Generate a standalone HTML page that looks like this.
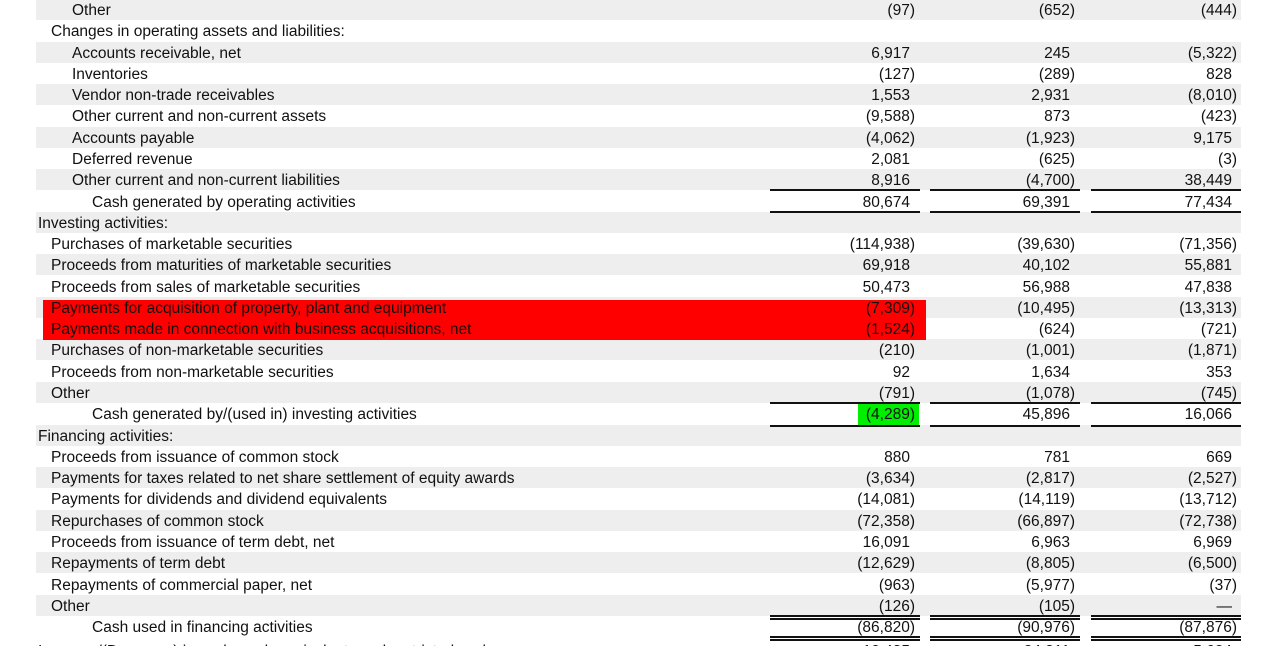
<!DOCTYPE html>
<html><head><meta charset="utf-8"><style>
html{height:646px;overflow:hidden}
body{margin:0;width:1280px;height:646px;overflow:hidden;background:#fff;font-family:"Liberation Sans",Arial,sans-serif;font-size:15.5px;color:#111;position:relative}
.r{position:absolute;left:36px;width:1205px;height:21.3px}
.g{background:#eeeeee}
.t{position:absolute;top:2px;white-space:nowrap;line-height:19px;z-index:2}
.n{position:absolute;top:2px;line-height:19px;white-space:nowrap;text-align:right;z-index:2}
.c1{right:326px}.c2{right:166px}.c3{right:4px}
.ln{position:absolute;height:2px;background:#111;z-index:3}
.red{position:absolute;left:43px;top:300px;width:883px;height:40px;background:#ff0000;z-index:1}
.grn{position:absolute;left:858px;top:404px;width:61px;height:21px;background:#00ee00;z-index:1}
</style></head><body>
<div id="rows"></div>
<div class="red"></div><div class="grn"></div>
<script>
var R=[
[2,"Other","(97)","(652)","(444)",1],
[1,"Changes in operating assets and liabilities:","","",""],
[2,"Accounts receivable, net","6,917","245","(5,322)",1],
[2,"Inventories","(127)","(289)","828"],
[2,"Vendor non-trade receivables","1,553","2,931","(8,010)",1],
[2,"Other current and non-current assets","(9,588)","873","(423)"],
[2,"Accounts payable","(4,062)","(1,923)","9,175",1],
[2,"Deferred revenue","2,081","(625)","(3)"],
[2,"Other current and non-current liabilities","8,916","(4,700)","38,449",1],
[3,"Cash generated by operating activities","80,674","69,391","77,434"],
[0,"Investing activities:","","","",1],
[1,"Purchases of marketable securities","(114,938)","(39,630)","(71,356)"],
[1,"Proceeds from maturities of marketable securities","69,918","40,102","55,881",1],
[1,"Proceeds from sales of marketable securities","50,473","56,988","47,838"],
[1,"Payments for acquisition of property, plant and equipment","(7,309)","(10,495)","(13,313)",1],
[1,"Payments made in connection with business acquisitions, net","(1,524)","(624)","(721)"],
[1,"Purchases of non-marketable securities","(210)","(1,001)","(1,871)",1],
[1,"Proceeds from non-marketable securities","92","1,634","353"],
[1,"Other","(791)","(1,078)","(745)",1],
[3,"Cash generated by/(used in) investing activities","(4,289)","45,896","16,066"],
[0,"Financing activities:","","","",1],
[1,"Proceeds from issuance of common stock","880","781","669"],
[1,"Payments for taxes related to net share settlement of equity awards","(3,634)","(2,817)","(2,527)",1],
[1,"Payments for dividends and dividend equivalents","(14,081)","(14,119)","(13,712)"],
[1,"Repurchases of common stock","(72,358)","(66,897)","(72,738)",1],
[1,"Proceeds from issuance of term debt, net","16,091","6,963","6,969"],
[1,"Repayments of term debt","(12,629)","(8,805)","(6,500)",1],
[1,"Repayments of commercial paper, net","(963)","(5,977)","(37)"],
[1,"Other","(126)","(105)","—",1],
[3,"Cash used in financing activities","(86,820)","(90,976)","(87,876)"],
[0,"Increase/(Decrease) in cash, cash equivalents and restricted cash","10,435","24,311","5,624",0]
];
var ind=[2,15,36,56];
var h="";
R.forEach(function(r,i){
 var top=Math.round(i*21.28-1);
 if(i==30) top=640;
 h+='<div class="r'+(r[5]?' g':'')+'" style="top:'+top+'px"><span class="t" style="left:'+ind[r[0]]+'px">'+r[1]+'</span>';
 ["c1","c2","c3"].forEach(function(c,k){var v=r[2+k];if(!v)return;var p=v.charAt(0)=="(";h+='<span class="n '+c+'"'+(p?'':' style="padding-right:5px"')+'>'+v+'</span>';});
 h+='</div>';
});
function L(y){[[770,150],[930,150],[1091,150]].forEach(function(a){h+='<div class="ln" style="left:'+a[0]+'px;top:'+y+'px;width:'+a[1]+'px"></div>';});}
L(189);L(211);L(402);L(425);L(615);L(618);L(636);L(639);
document.getElementById("rows").innerHTML=h;
</script>
</body></html>
